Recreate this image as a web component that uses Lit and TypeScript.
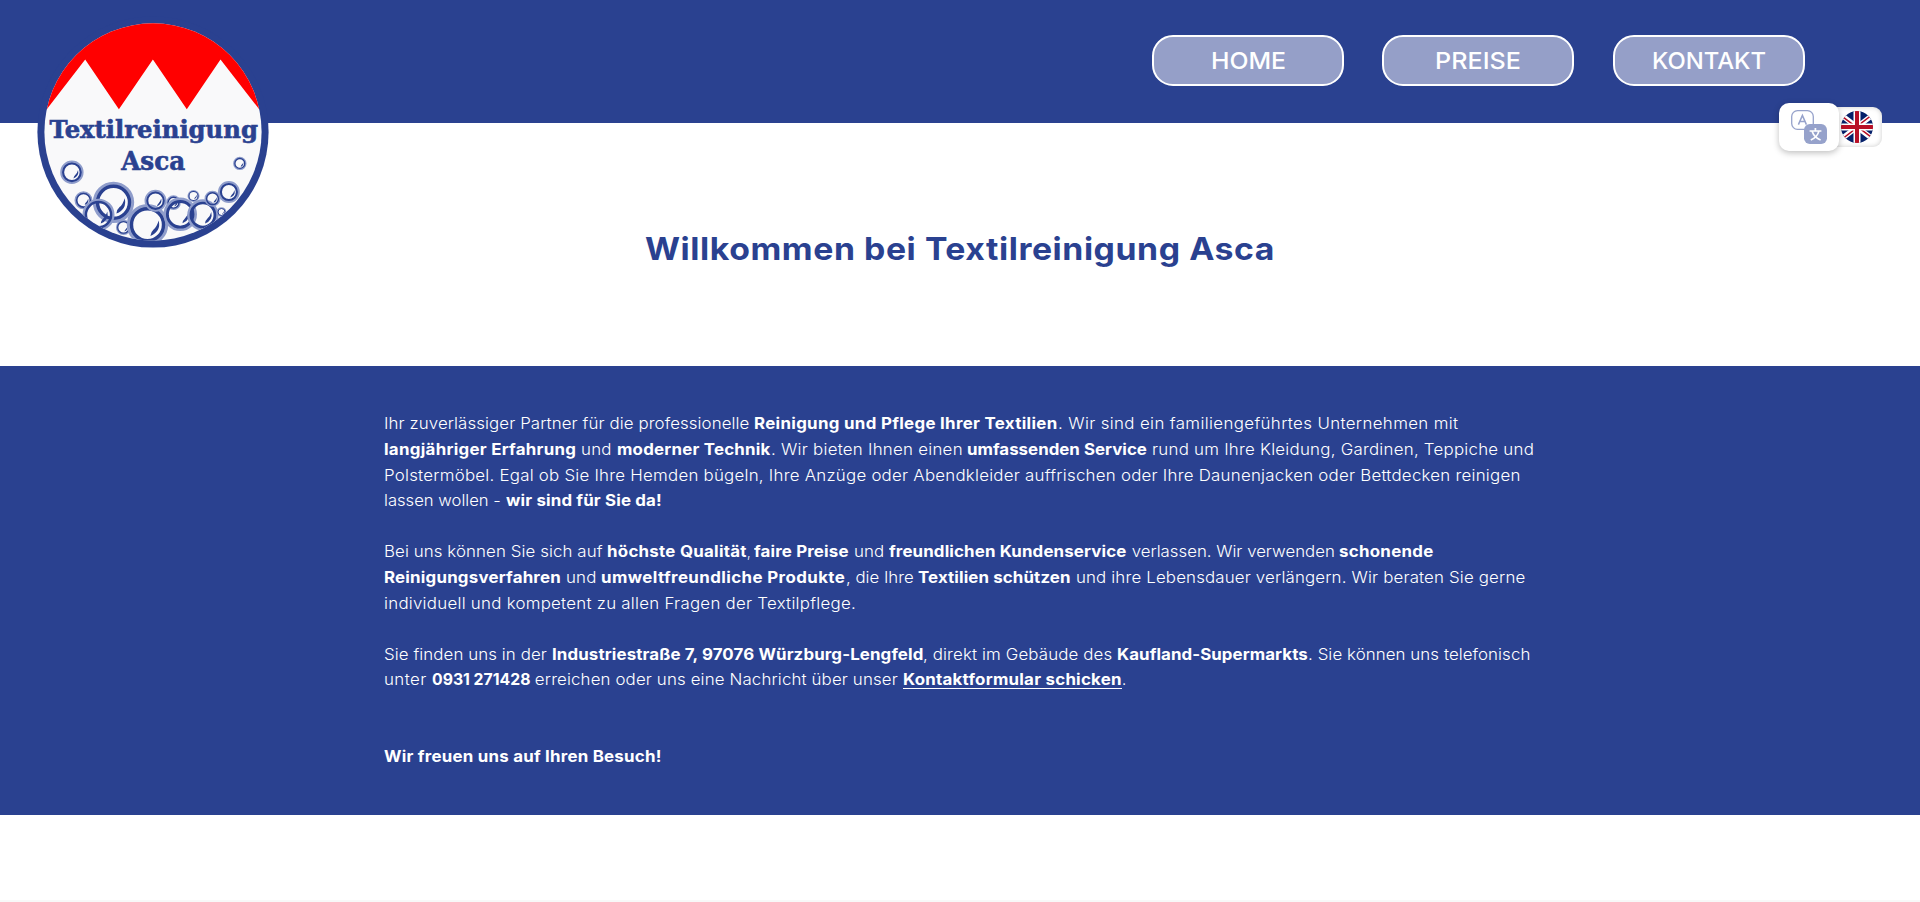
import { LitElement, html, css, svg } from "lit";
import { customElement, property } from "lit/decorators.js";

/** Text run whose glyphs are widened so that it takes up a given advance width. */
@customElement("fit-text")
class FitText extends LitElement {
  static styles = css`
    :host { display: inline-block; white-space: pre; }
    .run { display: inline-block; transform-origin: 0 50%; }
  `;
  @property() text = "";
  @property({ type: Number }) width = 0;

  render() {
    return html`<span class="run">${this.text}</span>`;
  }

  updated() {
    const run = this.renderRoot.querySelector(".run") as HTMLElement;
    run.style.transform = "none";
    run.style.letterSpacing = "0";
    const natural = run.getBoundingClientRect().width;
    const stretch = Math.min(this.width / natural, 1.075);
    const count = [...this.text].length;
    run.style.letterSpacing = `${(this.width / stretch - natural) / count}px`;
    run.style.transform = `scaleX(${stretch})`;
    this.style.width = `${this.width}px`;
  }
}

type Run = [text: string, endX: number, kind?: "b" | "a"];

/* endX is the distance from the left edge of the column to the end of the run */
const paragraphs: Run[][][] = [
  [
    [["Ihr zuverlässiger Partner für die professionelle ", 370.3], ["Reinigung und Pflege Ihrer Textilien", 673.8, "b"], [". Wir sind ein familiengeführtes Unternehmen mit", 1074.3]],
    [["langjähriger Erfahrung", 192.2, "b"], [" und ", 233], ["moderner Technik", 386.6, "b"], [". Wir bieten Ihnen einen ", 583.4], ["umfassenden Service", 763.3, "b"], [" rund um Ihre Kleidung, Gardinen, Teppiche und", 1150.4]],
    [["Polstermöbel. Egal ob Sie Ihre Hemden bügeln, Ihre Anzüge oder Abendkleider auffrischen oder Ihre Daunenjacken oder Bettdecken reinigen", 1136.6]],
    [["lassen wollen - ", 121.5], ["wir sind für Sie da!", 277.4, "b"]],
  ],
  [
    [["Bei uns können Sie sich auf ", 223.4], ["höchste Qualität", 363.2, "b"], [", ", 370.3], ["faire Preise", 464.9, "b"], [" und ", 505.2], ["freundlichen Kundenservice", 742.6, "b"], [" verlassen. Wir verwenden ", 955.1], ["schonende", 1049.6, "b"]],
    [["Reinigungsverfahren", 177, "b"], [" und ", 217.4], ["umweltfreundliche Produkte", 461.6, "b"], [", die Ihre ", 534], ["Textilien schützen", 686.6, "b"], [" und ihre Lebensdauer verlängern. Wir beraten Sie gerne", 1141]],
    [["individuell und kompetent zu allen Fragen der Textilpflege.", 472]],
  ],
  [
    [["Sie finden uns in der ", 167.7], ["Industriestraße 7, 97076 Würzburg-Lengfeld", 539.2, "b"], [", direkt im Gebäude des ", 733.4], ["Kaufland-Supermarkts", 924.2, "b"], [". Sie können uns telefonisch", 1146.6]],
    [["unter ", 47.8], ["0931 271428", 146.2, "b"], [" erreichen oder uns eine Nachricht über unser ", 519], ["Kontaktformular schicken", 737.8, "a"], [".", 742]],
  ],
  [[["Wir freuen uns auf Ihren Besuch!", 277.6, "b"]]],
];

/* centre x, centre y, ring radius, stroke width */
const bubbles: [number, number, number, number][] = [
  [72.4, 172.3, 8.8, 2.1],
  [84, 200.3, 6.8, 1.6],
  [114, 202.3, 16, 3.4],
  [99, 214.7, 12.6, 2.5],
  [124, 227.4, 5.8, 1.3],
  [148, 224.7, 16, 3.4],
  [156, 200.7, 8.2, 2],
  [174, 202.7, 5.4, 1.4],
  [180.7, 214.3, 12.8, 2.9],
  [194, 196, 4.5, 1.1],
  [203.4, 215, 12, 2.7],
  [213, 198.7, 5.9, 1.5],
  [229.4, 192, 8, 2.1],
  [240.3, 163.4, 4.9, 1.3],
  [222, 212, 3.5, 1],
];

@customElement("asca-logo")
class AscaLogo extends LitElement {
  static styles = css`
    :host { display: block; width: 232px; height: 232px; }
    svg { display: block; }
    .word { font-family: "DejaVu Serif", serif; font-weight: 700; fill: #2a4190; stroke: #2a4190; stroke-width: 0.6; }
  `;
  render() {
    return html`<svg width="232" height="232" viewBox="37.5 16 232 232">
      <defs><clipPath id="disc"><circle cx="153.5" cy="131.9" r="108.6" /></clipPath></defs>
      <circle cx="153.5" cy="132" r="115.6" fill="#2a4190" />
      <g clip-path="url(#disc)">
        <rect x="40" y="16" width="228" height="232" fill="#f9f9fa" />
        <path d="M40 16H268V119.5L259.7 109.3 221 59.5 187.3 109.3 153.4 59.5 119.4 109.3 85.7 59.5 47.3 109.3 40 118.5Z" fill="#f00" />
        ${bubbles.map(
          ([x, y, r, w]) => svg`
          <circle cx=${x} cy=${y} r=${r + w * 0.7} fill="none" stroke="#8f9dcb" stroke-width=${w * 1.35} />
          <circle cx=${x} cy=${y} r=${r} fill="none" stroke="#2a4190" stroke-width=${w} />
          <path transform="translate(${x} ${y}) scale(${r})" d="M.7 -.26Q.86 .42 .18 .7Q.2 .46 .38 .3Q.58 .14 .7 -.26Z" fill="#2a4190" />`
        )}
      </g>
      <text class="word" x="49.9" y="138.1" font-size="24.2" textLength="208.5" lengthAdjust="spacingAndGlyphs">Textilreinigung</text>
      <text class="word" x="121.7" y="170" font-size="25.2" textLength="64" lengthAdjust="spacingAndGlyphs">Asca</text>
    </svg>`;
  }
}

@customElement("language-switch")
class LanguageSwitch extends LitElement {
  static styles = css`
    :host { display: flex; align-items: center; }
    .toggle {
      position: relative; z-index: 1; box-sizing: border-box; width: 60px; height: 48px;
      padding: 7px 12px; border-radius: 10px; background: #fff;
      box-shadow: 0 2px 6px rgba(0, 0, 0, 0.25);
    }
    .flag {
      box-sizing: border-box; width: 51px; height: 40px; margin-left: -8px; padding: 4px 9px 4px 10px;
      border-radius: 0 9px 9px 0; background: #fff; box-shadow: inset 0 0 5px rgba(0, 0, 0, 0.2);
    }
    svg { display: block; }
  `;
  render() {
    return html`
      <div class="toggle">
        <svg width="36" height="35" viewBox="0 0 36 35" fill="none">
          <rect x="0.7" y="0.7" width="21.6" height="18.6" rx="5.8" stroke="#96a2cb" stroke-width="1.3" />
          <path d="M7.4 14.6L11.4 5.4L15.4 14.6M8.8 11.6H14" stroke="#96a2cb" stroke-width="1.5" />
          <rect x="13" y="14" width="23" height="20" rx="5.8" fill="#96a2cb" />
          <path d="M24.4 18V21M18.6 21H30.4M27.8 21.4C26.8 25.4 24 28.2 19.8 30M21.2 21.6C22.6 25.8 25.4 28.4 29.6 30" stroke="#fff" stroke-width="1.7" />
        </svg>
      </div>
      <div class="flag">
        <svg width="32" height="32" viewBox="0 0 32 32">
          <defs><clipPath id="round"><circle cx="16" cy="16" r="16" /></clipPath></defs>
          <g clip-path="url(#round)">
            <rect width="32" height="32" fill="#05206a" />
            <path d="M-5 0L37 32M37 0L-5 32" stroke="#fff" stroke-width="5.2" />
            <path d="M-5 .7L16 16.7M37 31.3L16 15.3M37 -.7L16 15.3M-5 32.7L16 16.7" stroke="#b80f26" stroke-width="1.5" />
            <path d="M16 0V32M0 16H32" stroke="#fff" stroke-width="7" />
            <path d="M16 0V32M0 16H32" stroke="#b80f26" stroke-width="4" />
          </g>
        </svg>
      </div>`;
  }
}

@customElement("app-root")
class AppRoot extends LitElement {
  static styles = css`
    :host {
      display: block; position: relative; height: 902px; overflow: hidden; background: #fff;
      font-family: "Inter", sans-serif; color: #2a4190;
    }
    .header {
      box-sizing: border-box; height: 122.6px; padding: 35px 115.2px 0 0; background: #2a4190;
      display: flex; justify-content: flex-end; align-items: flex-start; gap: 38.4px;
    }
    .nav-link {
      box-sizing: border-box; width: 192px; height: 51px; border: 2px solid #fff; border-radius: 21px;
      background: #959fc8; color: #fff; font-size: 23.3px; font-weight: 540; line-height: 48px;
      display: flex; justify-content: center; text-decoration: none;
    }
    asca-logo { position: absolute; left: 37px; top: 16px; }
    language-switch { position: absolute; left: 1779px; top: 103px; }
    .hero { height: 243.4px; display: flex; justify-content: center; box-sizing: border-box; }
    .title { margin: 104px 0 0; font-size: 31.4px; line-height: 44px; font-weight: 680; height: 44px; }
    .intro {
      box-sizing: border-box; height: 449px; padding: 45.4px 384px 0; background: #2a4190; color: #fff;
      font-size: 15.7px; line-height: 25.6px; font-weight: 300;
      display: flex; flex-direction: column; gap: 25.6px;
    }
    .paragraph:last-child { margin-top: 25.6px; }
    .line { display: flex; height: 25.6px; white-space: pre; }
    .strong { font-weight: 700; }
    .link { font-weight: 700; color: inherit; text-decoration: none; height: 20.6px; border-bottom: 1px solid #fff; }
    .spacer { height: 85px; }
    .footer { height: 40px; background: #f8f8f8; }
  `;

  private line(runs: Run[]) {
    let from = 0;
    return html`<div class="line">${runs.map(([text, endX, kind]) => {
      const width = endX - from;
      from = endX;
      return kind === "a"
        ? html`<a class="link"><fit-text .text=${text} .width=${width}></fit-text></a>`
        : html`<fit-text class=${kind === "b" ? "strong" : ""} .text=${text} .width=${width}></fit-text>`;
    })}</div>`;
  }

  render() {
    return html`
      <header class="header">
        <a class="nav-link"><fit-text text="HOME" width="75"></fit-text></a>
        <a class="nav-link"><fit-text text="PREISE" width="86"></fit-text></a>
        <a class="nav-link"><fit-text text="KONTAKT" width="114"></fit-text></a>
      </header>
      <div class="hero"><h1 class="title"><fit-text text="Willkommen bei Textilreinigung Asca" width="630"></fit-text></h1></div>
      <section class="intro">
        ${paragraphs.map((p) => html`<div class="paragraph">${p.map((l) => this.line(l))}</div>`)}
      </section>
      <div class="spacer"></div>
      <footer class="footer"></footer>
      <asca-logo></asca-logo>
      <language-switch></language-switch>
    `;
  }
}
